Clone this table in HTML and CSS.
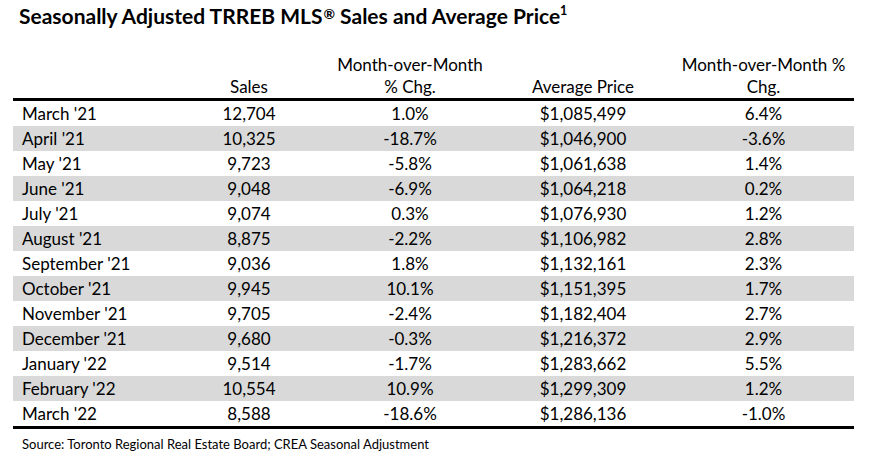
FILE: index.html
```html
<!DOCTYPE html>
<html>
<head>
<meta charset="utf-8">
<link rel="stylesheet" href="styles.css">
</head>
<body>
<div class="page">
  <h1 class="title">Seasonally Adjusted TRREB MLS<span class="reg">®</span> Sales and Average Price<sup>1</sup></h1>
  <table class="data">
    <colgroup>
      <col class="c1"><col class="c2"><col class="c3"><col class="c4"><col class="c5">
    </colgroup>
    <thead>
      <tr>
        <th></th>
        <th>Sales</th>
        <th>Month-over-Month<br>% Chg.</th>
        <th>Average Price</th>
        <th>Month-over-Month %<br>Chg.</th>
      </tr>
    </thead>
    <tbody>
      <tr><td>March '21</td><td>12,704</td><td>1.0%</td><td>$1,085,499</td><td>6.4%</td></tr>
      <tr class="alt"><td>April '21</td><td>10,325</td><td>-18.7%</td><td>$1,046,900</td><td>-3.6%</td></tr>
      <tr><td>May '21</td><td>9,723</td><td>-5.8%</td><td>$1,061,638</td><td>1.4%</td></tr>
      <tr class="alt"><td>June '21</td><td>9,048</td><td>-6.9%</td><td>$1,064,218</td><td>0.2%</td></tr>
      <tr><td>July '21</td><td>9,074</td><td>0.3%</td><td>$1,076,930</td><td>1.2%</td></tr>
      <tr class="alt"><td>August '21</td><td>8,875</td><td>-2.2%</td><td>$1,106,982</td><td>2.8%</td></tr>
      <tr><td>September '21</td><td>9,036</td><td>1.8%</td><td>$1,132,161</td><td>2.3%</td></tr>
      <tr class="alt"><td>October '21</td><td>9,945</td><td>10.1%</td><td>$1,151,395</td><td>1.7%</td></tr>
      <tr><td>November '21</td><td>9,705</td><td>-2.4%</td><td>$1,182,404</td><td>2.7%</td></tr>
      <tr class="alt"><td>December '21</td><td>9,680</td><td>-0.3%</td><td>$1,216,372</td><td>2.9%</td></tr>
      <tr><td>January '22</td><td>9,514</td><td>-1.7%</td><td>$1,283,662</td><td>5.5%</td></tr>
      <tr class="alt"><td>February '22</td><td>10,554</td><td>10.9%</td><td>$1,299,309</td><td>1.2%</td></tr>
      <tr><td>March '22</td><td>8,588</td><td>-18.6%</td><td>$1,286,136</td><td>-1.0%</td></tr>
    </tbody>
  </table>
  <p class="source">Source: Toronto Regional Real Estate Board; CREA Seasonal Adjustment</p>
</div>
</body>
</html>
```

FILE: styles.css
```css
html, body {
  margin: 0;
  padding: 0;
  background: #ffffff;
}
body {
  font-family: Lato, "Open Sans", "Liberation Sans", sans-serif;
  color: #000000;
}
.page {
  padding: 0 17px 0 13px;
  width: 841px;
}
.title {
  margin: 0;
  padding: 2px 0 0 6px;
  font-size: 21px;
  font-weight: 700;
  line-height: 28px;
  height: 28px;
  letter-spacing: 0;
}
.title .reg {
  font-size: 14px;
  line-height: 0;
  vertical-align: 5px;
  margin-left: 1px;
}
.title sup {
  font-size: 12.5px;
  line-height: 0;
  vertical-align: 9px;
}
.data {
  margin-top: 24px;
  width: 841px;
  border-collapse: collapse;
  table-layout: fixed;
  font-size: 17px;
}
.c1 { width: 158px; }
.c2 { width: 156px; }
.c3 { width: 166px; }
.c4 { width: 180px; }
.c5 { width: 181px; }
.data th {
  font-weight: 400;
  text-align: center;
  vertical-align: bottom;
  line-height: 22px;
  padding: 0;
  border-bottom: 3px solid #000000;
}
.data td {
  height: 25px;
  padding: 0;
  line-height: 25px;
  text-align: center;
  white-space: nowrap;
}
.data td:first-child {
  text-align: left;
  padding-left: 9px;
}
.data tbody tr:last-child td {
  border-bottom: 3px solid #000000;
}
.data tr.alt td {
  background: #d9d9d9;
}
.source {
  margin: 7px 0 0 9px;
  font-size: 13px;
  line-height: 16px;
}
```
